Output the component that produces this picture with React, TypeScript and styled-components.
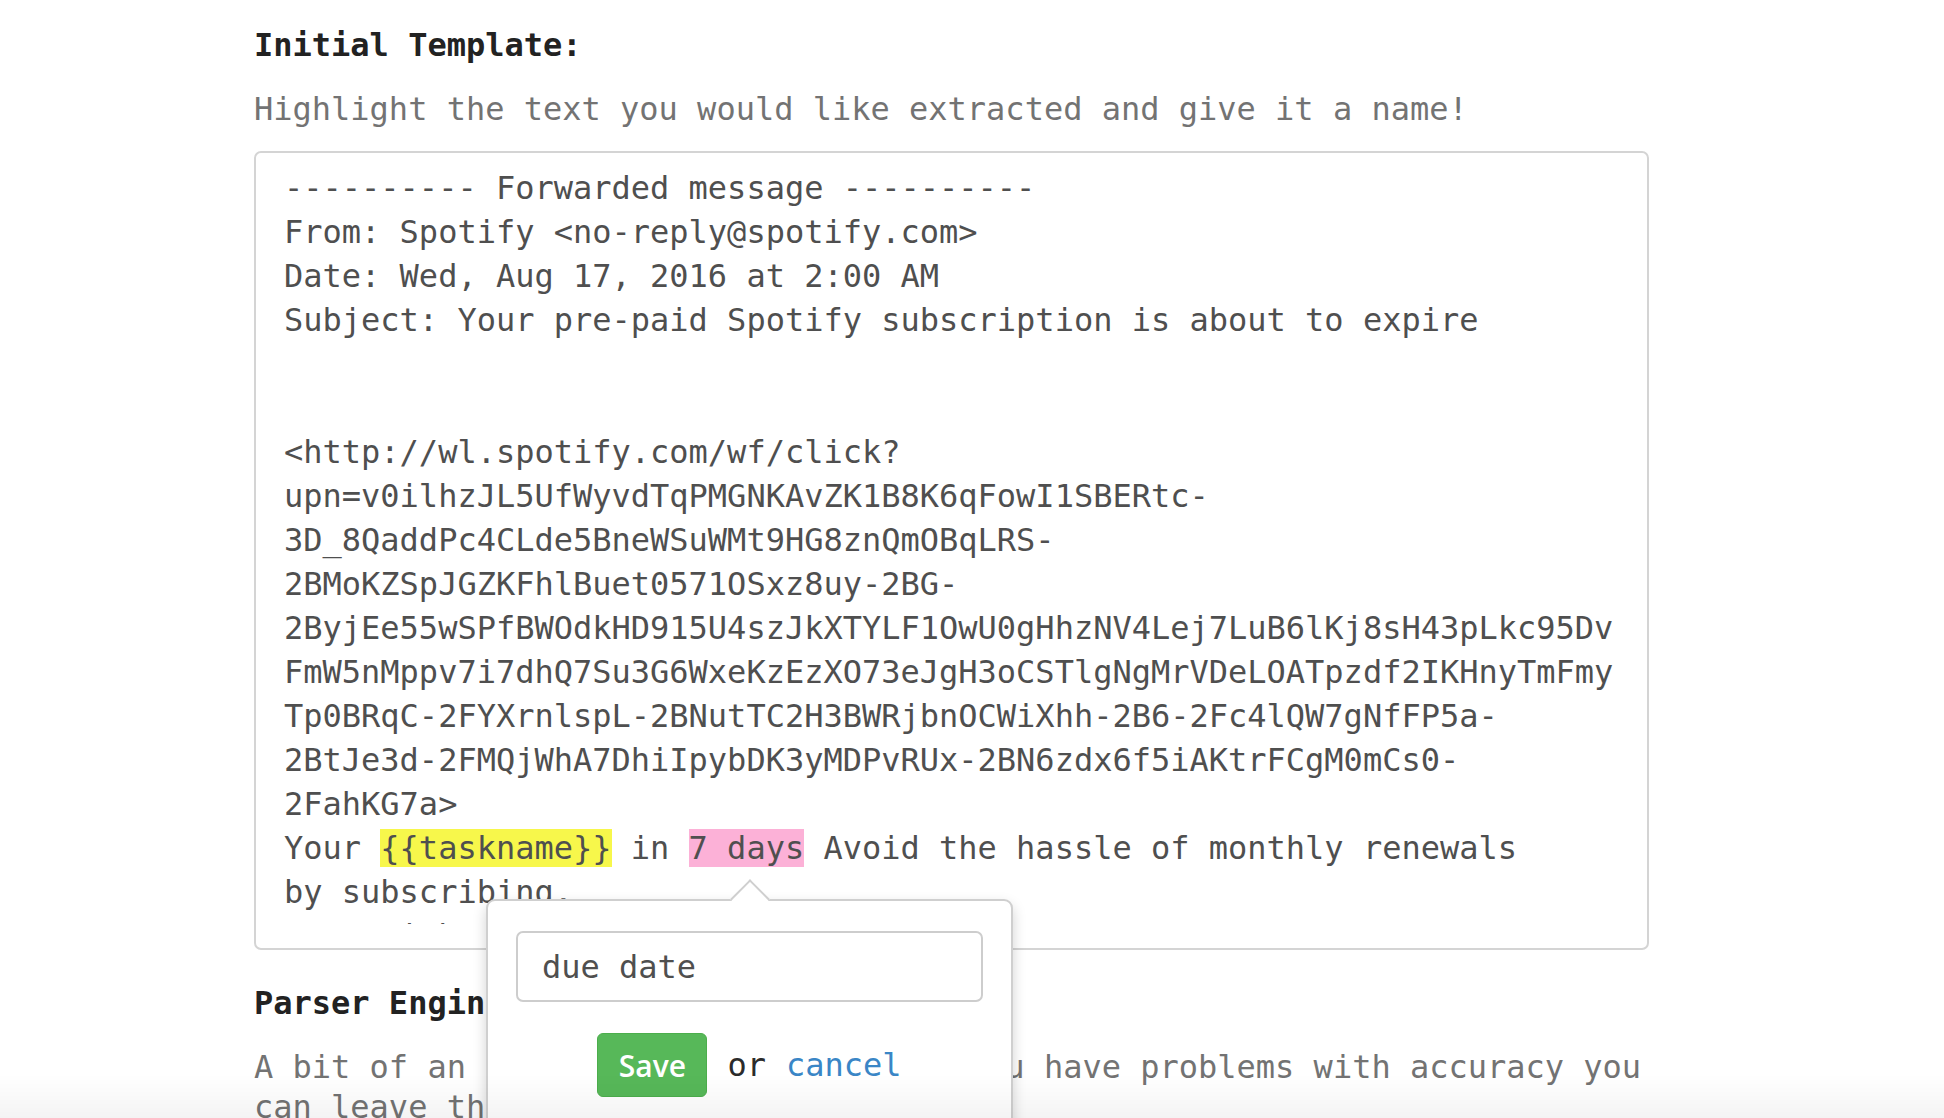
import React from 'react'
import styled, { createGlobalStyle } from 'styled-components'

const GlobalStyle = createGlobalStyle`
  html, body {
    margin: 0;
    background: #fff;
  }
  body {
    font-family: "DejaVu Sans Mono", "Liberation Mono", monospace;
    overflow: hidden;
  }
`

const Page = styled.main`
  position: relative;
  width: 1395px;
  margin-left: 254px;
  padding-top: 23px;
`

const Heading = styled.h2<{ $gap?: number }>`
  margin: ${p => p.$gap ?? 0}px 0 0;
  font-size: 32px;
  line-height: 44px;
  font-weight: bold;
  color: #222;
`

const Hint = styled.p`
  margin: 22px 0 0;
  font-size: 32px;
  line-height: 40px;
  color: #737373;
  white-space: nowrap;
`

const Paragraph = styled.p`
  margin: 22px 0 0;
  font-size: 32px;
  line-height: 40px;
  color: #737373;
`

const TemplateBox = styled.div`
  margin-top: 22px;
  border: 2px solid #d4d4d4;
  border-radius: 7px;
  padding: 13px 28px 24px;
  background: #fff;
`

const Scroller = styled.div`
  height: 758px;
  overflow: hidden;
  font-size: 32px;
  line-height: 44px;
  color: #4f4f4f;
  white-space: pre;
`

const Mark = styled.span<{ $tone: 'yellow' | 'pink' }>`
  background: ${p => (p.$tone === 'yellow' ? '#f7f74b' : '#fcb1d7')};
`

const Popover = styled.div`
  position: absolute;
  left: 232px;
  top: 899px;
  width: 527px;
  box-sizing: border-box;
  padding: 30px 28px 40px;
  background: #fff;
  border: 2px solid #cfcfcf;
  border-radius: 9px;
  box-shadow: 0 6px 14px rgba(0, 0, 0, 0.18);
  z-index: 2;

  &::before {
    content: '';
    position: absolute;
    top: -16px;
    left: 50%;
    margin-left: -14px;
    width: 28px;
    height: 28px;
    box-sizing: border-box;
    background: #fff;
    border-left: 2px solid #cfcfcf;
    border-top: 2px solid #cfcfcf;
    transform: rotate(45deg);
  }
`

const NameInput = styled.input`
  display: block;
  width: 100%;
  height: 71px;
  box-sizing: border-box;
  padding: 0 24px;
  border: 2px solid #cdcdcd;
  border-radius: 7px;
  font-family: "DejaVu Sans Mono", "Liberation Mono", monospace;
  font-size: 32px;
  color: #4f4f4f;
  outline: none;
`

const Actions = styled.div`
  display: flex;
  justify-content: center;
  align-items: center;
  gap: 20px;
  margin-top: 31px;
  font-size: 32px;
`

const SaveButton = styled.button`
  width: 110px;
  height: 64px;
  border: 1px solid #4cae4c;
  border-radius: 6px;
  background: #57b859;
  color: #fff;
  font-family: "Open Sans", "Noto Sans", sans-serif;
  font-weight: 600;
  font-size: 30px;
  cursor: pointer;
`

const OrText = styled.span`
  color: #2b2b2b;
`

const CancelLink = styled.a`
  color: #3a86c6;
  text-decoration: none;
`

const BottomFade = styled.div`
  position: fixed;
  left: 0;
  right: 0;
  bottom: 0;
  height: 44px;
  background: linear-gradient(rgba(0, 0, 0, 0), rgba(0, 0, 0, 0.045));
  pointer-events: none;
  z-index: 3;
`

const header = `---------- Forwarded message ----------
From: Spotify <no-reply@spotify.com>
Date: Wed, Aug 17, 2016 at 2:00 AM
Subject: Your pre-paid Spotify subscription is about to expire


<http://wl.spotify.com/wf/click?
upn=v0ilhzJL5UfWyvdTqPMGNKAvZK1B8K6qFowI1SBERtc-
3D_8QaddPc4CLde5BneWSuWMt9HG8znQmOBqLRS-
2BMoKZSpJGZKFhlBuet0571OSxz8uy-2BG-
2ByjEe55wSPfBWOdkHD915U4szJkXTYLF1OwU0gHhzNV4Lej7LuB6lKj8sH43pLkc95Dv
FmW5nMppv7i7dhQ7Su3G6WxeKzEzXO73eJgH3oCSTlgNgMrVDeLOATpzdf2IKHnyTmFmy
Tp0BRqC-2FYXrnlspL-2BNutTC2H3BWRjbnOCWiXhh-2B6-2Fc4lQW7gNfFP5a-
2BtJe3d-2FMQjWhA7DhiIpybDK3yMDPvRUx-2BN6zdx6f5iAKtrFCgM0mCs0-
2FahKG7a>
`

const App: React.FC = () => {
  return (
    <>
      <GlobalStyle />
      <Page>
        <Heading>Initial Template:</Heading>
        <Hint>Highlight the text you would like extracted and give it a name!</Hint>

        <TemplateBox>
          <Scroller>
            {header}
            Your <Mark $tone="yellow">{'{{taskname}}'}</Mark> in <Mark $tone="pink">7 days</Mark> Avoid the hassle of monthly renewals
            {'\nby subscribing.\nSave with a yearly plan.\n'}
          </Scroller>
        </TemplateBox>

        <Heading $gap={31}>Parser Engine:</Heading>
        <Paragraph>
          A bit of an experimental feature. If you have problems with accuracy you can leave the default engine selected.
        </Paragraph>

        <Popover>
          <NameInput defaultValue="due date" />
          <Actions>
            <SaveButton>Save</SaveButton>
            <OrText>or</OrText>
            <CancelLink href="#">cancel</CancelLink>
          </Actions>
        </Popover>
      </Page>
      <BottomFade />
    </>
  )
}

export default App
